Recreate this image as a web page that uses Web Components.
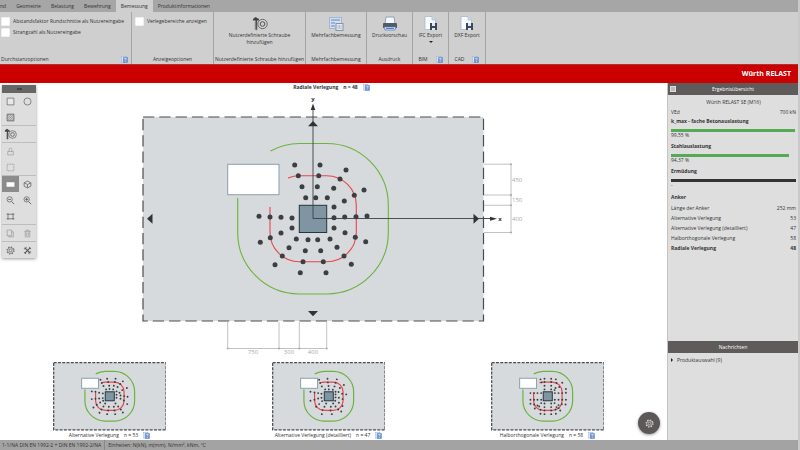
<!DOCTYPE html>
<html lang="de">
<head>
<meta charset="utf-8">
<title>Würth RELAST</title>
<style>
html,body{height:100%;margin:0}
body{font:5px/7px "Open Sans","Noto Sans",sans-serif;color:#333;background:#c9c9c9}
</style>
</head>
<body>
<relast-app></relast-app>
<script>
const ICONS={
help:`<svg viewBox="0 0 16 16"><rect x="1" y="1" width="10" height="13" fill="#eaf1fa" stroke="#8fa9d4"/><rect x="5" y="3" width="10" height="12" rx="1" fill="#6f95d0" stroke="#5078ba"/><path d="M8 7c0-3 4-3 4-.5 0 1.500-2 1.500-2 3.500M10 12v1.500" fill="none" stroke="#fff" stroke-width="1.600"/></svg>`,
screw:`<svg viewBox="0 0 16 16"><g fill="none" stroke="#555"><circle cx="10.500" cy="8" r="4.700" stroke-width=".8"/><circle cx="10.500" cy="8" r="2.300" stroke-width="1"/></g><path d="M1 3l2.500-2L7 3v1.500H5V13l-.8 1.500L3.500 13V4.500H1z" fill="#444"/><path d="M2.500 7H6M2.500 9H6M2.500 11H6M2.500 13H6" stroke="#777" stroke-width=".7"/></svg>`,
multi:`<svg viewBox="0 0 16 16"><rect x="1.500" y="1.500" width="12" height="11" fill="#d3deee" stroke="#a3b7d4"/><path d="M3 4h9M3 7h4M3 10h4" stroke="#86a4d2" stroke-width="1.600"/><rect x="8" y="7.500" width="7" height="7" fill="#e6e9ee" stroke="#8494ad"/><path d="M9.500 10h4M9.500 12h4" stroke="#8799b6" stroke-dasharray="1 .5"/></svg>`,
print:`<svg viewBox="0 0 16 16"><path d="M4 1h8l1 7H3z" fill="#f5f8fc" stroke="#6f87aa" stroke-width=".7"/><path d="M1 8q0-1 1-1h12q1 0 1 1v4H1z" fill="#515b6b"/><path d="M2 11h12l-1 3H3z" fill="#dce8f7" stroke="#5476a8" stroke-width=".7"/><path d="M4 12.500h8" stroke="#4283d8"/></svg>`,
save:`<svg viewBox="0 0 16 16"><path d="M2 .5h7l3.500 3.500v9.500H2z" fill="#fafcff" stroke="#a9b6c9" stroke-width=".8"/><path d="M9 .5V4h3.500" fill="#d5dfec" stroke="#a9b6c9" stroke-width=".7"/><path d="M7 7h7v7H7z" fill="#39485c"/><path d="M9 7h3v3H9zM9 12h3v2H9z" fill="#e4e9ef"/></svg>`,
square:`<svg viewBox="0 0 16 16"><path d="M2 2h12v12H2z" fill="#e8e8e8" stroke="#666" stroke-width="1.300"/></svg>`,
circle:`<svg viewBox="0 0 16 16"><circle cx="8" cy="8" r="6.300" fill="none" stroke="#666" stroke-width="1.300"/></svg>`,
hatch:`<svg viewBox="0 0 16 16"><path d="M2 2h12v12H2z" fill="#ccc" stroke="#555" stroke-width="1.300"/><path d="M2 6l4-4M2 10l8-8M2 14L14 2M6 14l8-8M10 14l4-4" stroke="#777"/></svg>`,
lock:`<svg viewBox="0 0 16 16"><path d="M3 8h10v6H3zM5.500 8V4.500a2.500 2.500 0 0 1 5 0V8" fill="none" stroke="#a0a0a0" stroke-width="1.300"/></svg>`,
dashed:`<svg viewBox="0 0 16 16"><path d="M2 2h12v12H2z" fill="none" stroke="#999" stroke-width="1.500" stroke-dasharray="2.500 1.500"/></svg>`,
plane:`<svg viewBox="0 0 16 16"><path d="M1 4h14v8H1z" fill="#fff"/></svg>`,
cube:`<svg viewBox="0 0 16 16"><path d="M8 2l6 3v6l-6 3-6-3V5zM2 5l6 3 6-3M8 8v6" fill="none" stroke="#666" stroke-width="1.400"/></svg>`,
zoomout:`<svg viewBox="0 0 16 16"><path d="M10 10l4.500 4.500M4 6h5" stroke="#555" stroke-width="1.500"/><circle cx="6.500" cy="6" r="4.700" fill="none" stroke="#555" stroke-width="1.200"/></svg>`,
zoomin:`<svg viewBox="0 0 16 16"><path d="M10 10l4.500 4.500M4 6h5M6.500 3.500v5" stroke="#555" stroke-width="1.500"/><circle cx="6.500" cy="6" r="4.700" fill="none" stroke="#555" stroke-width="1.200"/></svg>`,
fit:`<svg viewBox="0 0 16 16"><path d="M3.500 2v12M12.500 2v12M1 4h14M1 12h14" fill="none" stroke="#666" stroke-width="1.400"/></svg>`,
copy:`<svg viewBox="0 0 16 16"><path d="M2 2h8v10H2zM10 5h3v9H5v-2" fill="none" stroke="#999" stroke-width="1.300"/></svg>`,
trash:`<svg viewBox="0 0 16 16"><path d="M2.500 4h11M6 4V2h4v2M4 4v10h8V4M6.500 6v6M9.500 6v6" fill="none" stroke="#999" stroke-width="1.300"/></svg>`,
gear:`<svg viewBox="0 0 16 16"><g fill="none" stroke="currentColor"><circle cx="8" cy="8" r="5" stroke-width="1.200"/><circle cx="8" cy="8" r="6.300" stroke-width="1.800" stroke-dasharray="2.500 2.450"/><circle cx="8" cy="8" r="2.200" stroke-width="1.200"/></g></svg>`,
tools:`<svg viewBox="0 0 16 16"><path d="M3 3l10 10M13 3L3 13" stroke="#555" stroke-width="2"/><path d="M1.500 5a3 3 0 0 0 4-3.500M10.500 14.500a3 3 0 0 1 4-4M10.500 1.500l4 4M1.500 10.500l4 4" fill="none" stroke="#555" stroke-width="1.300"/></svg>`
};
const BUTTON=`button{font:inherit;color:inherit;background:none;border:0;padding:0;margin:0;cursor:pointer}`;
const define=(name,render)=>customElements.define(name,class extends HTMLElement{
  connectedCallback(){ if(!this.shadowRoot) this.attachShadow({mode:'open'}).innerHTML=render(this); }
});

define('ui-icon',el=>`<style>:host{display:inline-flex;width:var(--size,7px);height:var(--size,7px);flex:none}svg{width:100%;height:100%}</style>${ICONS[el.getAttribute('name')]}`);

define('tab-strip',()=>`<style>${BUTTON}
:host{display:flex;height:12px;background:#a6a6a6}
button{padding:0 5px;line-height:11px}
button:first-child{padding-left:0}
button[aria-selected=true]{background:#cfcfcf}
nav{display:flex}</style>
<nav role="tablist"><button role="tab">nd</button><button role="tab">Geometrie</button><button role="tab">Belastung</button><button role="tab">Bewehrung</button><button role="tab" aria-selected="true">Bemessung</button><button role="tab">Produktinformationen</button></nav>`);

define('ribbon-group',el=>`<style>${BUTTON}
:host{display:flex;flex-direction:column;justify-content:space-between;border-right:1px solid #a4a4a4;padding:4px 1px 1px;box-sizing:border-box}
footer{display:flex;align-items:center;justify-content:center;gap:8px;height:8px;white-space:nowrap}
:host([wide]) footer{justify-content:space-between;padding-right:2px}
</style><slot></slot><footer><span>${el.getAttribute('label')}</span>${el.hasAttribute('help')?'<button aria-label="Hilfe" style="display:flex"><ui-icon name="help"></ui-icon></button>':''}</footer>`);

define('ribbon-button',el=>`<style>${BUTTON}
:host{display:flex;justify-content:center}
button{display:flex;flex-direction:column;align-items:center;line-height:7px}
ui-icon{--size:16px}
i{border:solid transparent;border-width:2px 2px 0;border-top-color:#222;margin-top:2px}</style>
<button><ui-icon name="${el.getAttribute('icon')}"></ui-icon><span><slot></slot></span>${el.hasAttribute('menu')?'<i></i>':''}</button>`);

define('check-option',()=>`<style>
:host{display:block}
label{display:flex;align-items:center;gap:3px;height:11px;white-space:nowrap}
input{appearance:none;width:9px;height:9px;margin:0;background:#fff;border:1px solid #f0f0f0;border-radius:1px}
input:checked{background:#444}</style>
<label><input type="checkbox"><slot></slot></label>`);

define('ribbon-bar',()=>`<style>
:host{display:grid;grid-template-columns:132px 82px 92px 61px 46px 36px 37px 1fr;height:53px;background:#cfcfcf;border-bottom:1px solid #a33;box-sizing:border-box}
.one{padding-left:2px}</style>
<ribbon-group wide help label="Durchstanzoptionen"><div><check-option>Abstandsfaktor Rundschnitte als Nutzereingabe</check-option><check-option>Strangzahl als Nutzereingabe</check-option></div></ribbon-group>
<ribbon-group label="Anzeigeoptionen"><div class="one"><check-option>Verlegebereiche anzeigen</check-option></div></ribbon-group>
<ribbon-group label="Nutzerdefinierte Schraube hinzufügen"><ribbon-button icon="screw">Nutzerdefinierte Schraube<br>hinzufügen</ribbon-button></ribbon-group>
<ribbon-group label="Mehrfachbemessung"><ribbon-button icon="multi">Mehrfachbemessung</ribbon-button></ribbon-group>
<ribbon-group label="Ausdruck"><ribbon-button icon="print">Druckvorschau</ribbon-button></ribbon-group>
<ribbon-group help label="BIM"><ribbon-button icon="save" menu>IFC Export</ribbon-button></ribbon-group>
<ribbon-group help label="CAD"><ribbon-button icon="save">DXF Export</ribbon-button></ribbon-group>`);

define('tool-palette',()=>{
  const rows=[['square','circle'],['hatch'],0,['screw'],0,['lock'],['dashed'],0,['plane!','cube'],['zoomout','zoomin'],['fit'],0,['copy','trash'],0,['gear','tools']];
  return `<style>${BUTTON}
:host{display:block;background:#dedede;box-shadow:0 1px 3px #0006;color:#666}
header{height:8px;background:#666;display:flex;justify-content:center;align-items:center}
header i{width:5px;height:2px;background:#444}
div{display:grid;grid-template-columns:17px 17px;grid-auto-rows:16px}
button{display:flex;align-items:center;justify-content:center;grid-column:1}
button+button.r{grid-column:2}
button.on{background:#8c8c8c}
ui-icon{--size:9px}.s{--size:13px}
hr{margin:0;border:0;border-top:1px solid #bdbdbd}</style><header><i></i></header>`+
  rows.map(r=>r?`<div>${r.map((n,i)=>{const on=n.endsWith('!');n=n.replace('!','');return `<button aria-label="${n}" class="${on?'on':''} ${i?'r':''}"><ui-icon class="${n=='screw'?'s':''}" name="${n}"></ui-icon></button>`}).join('')}</div>`:'<hr>').join('');
});

/* Anchor positions per layout, mapped to plan units by origin and factor. */
const LAYOUTS={
radial:{ox:215,oy:80,k:1/3,p:`239,255 315,255 393,270 250,287 311,287 375,297 447,330 261,320 307,320 356,325 418,346 272,353 302,353 337,353 388,363 357,381 132,409 165,411 198,412 231,414 357,413 389,411 423,410 456,408 231,444 357,444 198,459 390,458 166,473 421,472 136,487 452,485 244,477 279,479 308,479 345,477 222,503 366,502 271,512 317,512 202,528 387,528 264,545 325,545 180,554 409,553 256,578 333,578`},
alternative:{ox:104.5,oy:94.7,k:1.013,p:`178,73 198,70 223,70 245,78 182,83 201,80 221,80 237,86 257,98 187,92 204,91 218,91 229,95 243,104 195,102 205,101 216,102 226,108 235,112 152,108 163,109 174,112 185,114 226,118 238,120 249,122 259,124 226,127 238,130 248,135 258,146 152,131 163,130 174,129 185,128 157,156 167,148 177,141 186,136 175,172 181,162 187,153 192,144 198,176 201,165 203,154 222,176 220,165 218,154 245,171 239,162 231,153 223,144`},
detail:{ox:101.5,oy:94.7,k:1.013,p:`180,73 205,70 233,72 183,83 206,81 229,82 254,89 188,93 208,92 226,93 242,98 198,102 209,102 221,103 229,109 238,110 154,109 166,111 177,113 187,115 229,117 249,115 261,117 154,136 166,133 177,129 187,127 229,126 239,127 250,131 171,154 180,146 189,137 228,136 239,142 250,152 188,176 190,164 196,154 201,144 218,176 214,165 215,154 246,168 237,162 229,153 222,144`},
ortho:{ox:101.5,oy:94.7,k:1.013,p:`187,72 199,70 219,70 233,72 190,81 199,80 219,80 235,83 252,82 199,91 219,91 232,98 243,95 199,102 219,102 229,104 230,113 241,113 252,113 263,112 263,101 230,133 241,133 252,133 263,133 157,113 168,113 178,113 189,113 157,133 168,133 178,133 189,133 262,147 251,146 241,149 235,155 199,144 199,155 199,165 199,176 219,144 219,155 219,165 219,176 187,175 187,163 233,175 232,162 246,165 241,158 157,145 168,147 178,150 170,159 183,153 189,143 229,143`}};

define('anchor-plan',el=>{
  const L=LAYOUTS[el.getAttribute('layout')],main=el.hasAttribute('main');
  const dots=L.p.split(' ').map(s=>{const [x,y]=s.split(',');return `<circle cx="${(x*L.k+L.ox).toFixed(1)}" cy="${(y*L.k+L.oy).toFixed(1)}" r="${main?2.5:2.9}"/>`}).join('');
  const axes=!main?'':`<g stroke="#3c3f42" stroke-width=".9" fill="none"><path d="M313 108V218.500H492"/></g>
<g fill="#303336"><path d="M313 103.500l2.300 6.500h-4.600zM497 218.700l-7 2v-4zM308 126.300h10l-5-5.300zM308 311h10l-5 5.300zM152.500 213.800v10l-5.500-5zM473.500 213.800v10l5.500-5z"/></g>
<g font-size="6" font-weight="700" fill="#333" text-anchor="middle"><text x="313" y="101">y</text><text x="500" y="221">x</text></g>
<g stroke="#b3b3b3" stroke-width=".8" fill="none"><path d="M484 164.200h27M484 195h27M484 205.300h27M484 232.500h27M511 164.200v68.300M227.700 322v26.500M279 322v26.500M299.300 322v26.500M326.700 322v26.500M227.700 348.500h99"/></g>
<g fill="#aaa">${[[511,164.2],[511,195],[511,205.3],[511,232.5],[227.7,348.5],[279,348.5],[299.3,348.5],[326.700,348.5]].map(p=>`<circle cx="${p[0]}" cy="${p[1]}" r="1"/>`).join('')}</g>
<g font-size="6" fill="#a8a8a8"><text x="512" y="182">450</text><text x="512" y="202">150</text><text x="512" y="221">400</text><g text-anchor="middle"><text x="253" y="354">750</text><text x="289" y="354">300</text><text x="313" y="354">400</text></g></g>`;
  return `<style>:host{display:block}svg{display:block;width:100%;height:100%}</style>
<svg viewBox="${main?'0 92 667 266':'141 115 345 208'}">
<rect x="143" y="117" width="340.500" height="204" fill="#d6dadd" stroke="#4a4d50" stroke-width="${main?1.2:3.8}" stroke-dasharray="${main?'11.300 5':'9 4'}"/>
<g fill="none" stroke="#6cb33f" stroke-width="${main?1.1:3.6}"><path d="M270.500 151A61.600 61.600 0 0 1 299.300 143.500H326.700A61.600 61.600 0 0 1 388.300 205.300V232.400A61.600 61.600 0 0 1 326.700 294H299.300A61.600 61.600 0 0 1 237.700 232.400V198"/></g>
<g fill="none" stroke="#e8454c" stroke-width="${main?1.1:3.6}"><path d="M288 178A29.600 29.600 0 0 1 299.300 175.700H326.700A29.600 29.600 0 0 1 356.300 205.300V232.400A29.600 29.600 0 0 1 326.700 261.800H299.300A29.600 29.600 0 0 1 270 232.400V207"/></g>
<rect x="227.700" y="164.300" width="51.300" height="30.400" fill="#fff" stroke="#8ba0ac" stroke-width="${main?1:3}"/>
<rect x="299.300" y="205.300" width="27.400" height="27.200" fill="#7f96a2" stroke="#24353f" stroke-width="${main?1:3}"/>
<g fill="#3c3f42">${dots}</g>${axes}</svg>`;
});

define('plan-caption',el=>`<style>${BUTTON}
:host{display:flex;justify-content:center;align-items:center;gap:5px;height:8px;white-space:nowrap}
button{display:flex}</style><span><slot></slot></span><span>n = ${el.getAttribute('count')}</span><button aria-label="Hilfe"><ui-icon name="help"></ui-icon></button>`);

define('plan-view',()=>`<style>${BUTTON}
:host{display:flex;flex-direction:column;position:relative;background:#fff;min-width:0}
.title{font-weight:700;padding-right:4px}
.big{margin-top:1px}
.row{display:grid;grid-template-columns:repeat(3,1fr);padding-right:10px;margin-top:4px}
figure{margin:0;display:flex;flex-direction:column;align-items:center}
figure anchor-plan{width:52%}
figcaption{margin-top:1px}
tool-palette{position:absolute;left:2px;top:2px}
.fab{position:absolute;right:7px;bottom:6px;width:22px;height:22px;border-radius:50%;background:#5c5857;color:#ddd;display:flex;align-items:center;justify-content:center;box-shadow:0 1px 3px #0006}
.fab ui-icon{--size:9px}</style>
<plan-caption class="title" count="48">Radiale Verlegung</plan-caption>
<anchor-plan class="big" main layout="radial"></anchor-plan>
<div class="row">
<figure><anchor-plan layout="alternative"></anchor-plan><figcaption><plan-caption count="53">Alternative Verlegung</plan-caption></figcaption></figure>
<figure><anchor-plan layout="detail"></anchor-plan><figcaption><plan-caption count="47">Alternative Verlegung (detailliert)</plan-caption></figcaption></figure>
<figure><anchor-plan layout="ortho"></anchor-plan><figcaption><plan-caption count="58">Halborthogonale Verlegung</plan-caption></figcaption></figure>
</div>
<tool-palette></tool-palette>
<button class="fab" aria-label="Einstellungen"><ui-icon name="gear"></ui-icon></button>`);

define('panel-header',()=>`<style>:host{display:grid;grid-template-columns:12px 1fr 12px;align-items:center;height:12px;background:#5f5b5a;color:#fff;text-align:center}span{grid-column:2;grid-row:1}</style><slot name="icon"></slot><span><slot></slot></span>`);

define('usage-meter',el=>`<style>
:host{display:block;margin-bottom:3px}
b,span{display:block}b{line-height:8px}
div{height:3px;margin-top:4px}
i{display:block;height:100%;width:${el.getAttribute('fill')}%;background:${el.getAttribute('color')}}</style>
<b><slot></slot></b><div role="meter" aria-valuenow="${el.getAttribute('fill')}"><i></i></div><span>${el.getAttribute('value')}</span>`);

define('result-panel',()=>`<style>${BUTTON}
:host{display:flex;flex-direction:column;background:#dedede;border-left:1px solid #c4c4c4}
section{padding:3px 2px 0 3px}
.results{flex:1}
.messages{min-height:84px}
h3,h4{font-size:5px;line-height:8px;margin:0}
h3{font-weight:400;text-align:center;margin-bottom:2px}
h4{margin:4px 0 2px}
p{display:flex;justify-content:space-between;margin:0 0 1px;line-height:8px}
table{width:100%;border-collapse:collapse}
th,td{padding:0;height:10px;font-weight:inherit;text-align:left}
td{text-align:right}
.sum{font-weight:700}
.min{width:6px;height:6px;margin-left:2px;background:#bbb;border:1px solid #ddd;box-sizing:border-box}
summary{display:flex;align-items:center;gap:4px;line-height:8px}
summary::before{content:"";border:solid transparent;border-width:2px 0 2px 2px;border-left-color:#222}</style>
<panel-header><button slot="icon" class="min" aria-label="Einklappen"></button>Ergebnisübersicht</panel-header>
<section class="results"><h3>Würth RELAST SE (M16)</h3>
<p><span>VEd</span><span>700 kN</span></p>
<usage-meter fill="99.55" value="99,55 %" color="#55ab55">k_max - fache Betonauslastung</usage-meter>
<usage-meter fill="94.37" value="94,37 %" color="#55ab55">Stahlauslastung</usage-meter>
<usage-meter fill="100" value="-" color="#333">Ermüdung</usage-meter>
<h4>Anker</h4>
<table><tr><th>Länge der Anker</th><td>252 mm</td></tr><tr><th>Alternative Verlegung</th><td>53</td></tr><tr><th>Alternative Verlegung (detailliert)</th><td>47</td></tr><tr><th>Halborthogonale Verlegung</th><td>58</td></tr><tr class="sum"><th>Radiale Verlegung</th><td>48</td></tr></table></section>
<panel-header>Nachrichten</panel-header>
<section class="messages"><details><summary>Produktauswahl (9)</summary></details></section>`);

define('relast-app',()=>`<style>
:host{display:grid;grid-template-rows:auto auto 18px 1fr auto;min-height:100vh;padding-right:2px;box-sizing:border-box}
.brand{background:#c00;color:#fff;font:700 7px/18px "Open Sans","Noto Sans",sans-serif;text-align:right;padding-right:7px}
main{display:grid;grid-template-columns:minmax(0,1fr) 131px}
footer{height:10px;line-height:11px;background:#a3a3a3;display:flex;white-space:nowrap;color:#333;padding-left:2px}
footer span+span{border-left:1px solid #888;margin-left:3px;padding-left:3px}</style>
<tab-strip></tab-strip><ribbon-bar></ribbon-bar><div class="brand">Würth RELAST</div>
<main><plan-view></plan-view><result-panel></result-panel></main>
<footer><span>1-1/NA DIN EN 1992-2 + DIN EN 1992-2/NA</span><span>Einheiten: N(kN), m(mm), N/mm², kNm, °C</span></footer>`);
</script>
</body>
</html>
